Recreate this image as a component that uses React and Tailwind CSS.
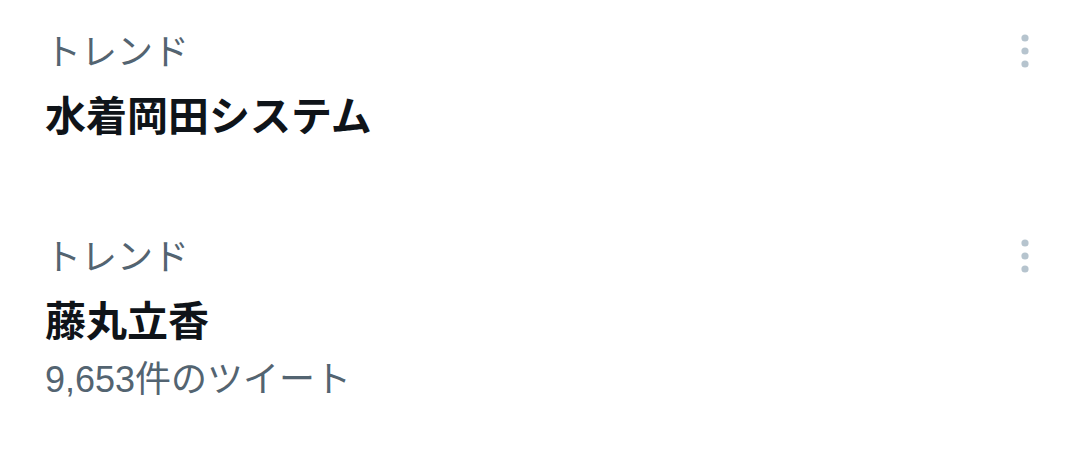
import React from "react";

const trends = [
  { label: "トレンド", title: "水着岡田システム", count: null },
  { label: "トレンド", title: "藤丸立香", count: "9,653件のツイート" },
];

function MoreIcon() {
  return (
    <svg width="14" height="40" viewBox="0 0 14 40" className="block">
      <circle cx="7" cy="7" r="3.6" fill="#b6c4ce" />
      <circle cx="7" cy="20" r="3.6" fill="#b6c4ce" />
      <circle cx="7" cy="33" r="3.6" fill="#b6c4ce" />
    </svg>
  );
}

function TrendItem({ label, title, count }) {
  return (
    <div className="relative h-[205px] pl-[45px] pr-[40px] pt-[27px]">
      <div className="text-[36px] leading-[44px] text-[#536471]">{label}</div>
      <div className="mt-[16px] text-[41px] leading-[52px] font-semibold text-[#0f1419]">
        {title}
      </div>
      {count && (
        <div
          className="mt-[14px] text-[36px] leading-[44px] text-[#536471]"
          style={{ fontFamily: '"Liberation Sans", "Noto Sans CJK JP", sans-serif' }}
        >
          {count}
        </div>
      )}
      <div className="absolute right-[48px] top-[31px]">
        <MoreIcon />
      </div>
    </div>
  );
}

export default function App() {
  return (
    <div
      className="w-[1080px] h-[449px] bg-white overflow-hidden"
      style={{ fontFamily: '"Noto Sans CJK JP", "Noto Sans", sans-serif' }}
    >
      {trends.map((t, i) => (
        <TrendItem key={i} {...t} />
      ))}
    </div>
  );
}
